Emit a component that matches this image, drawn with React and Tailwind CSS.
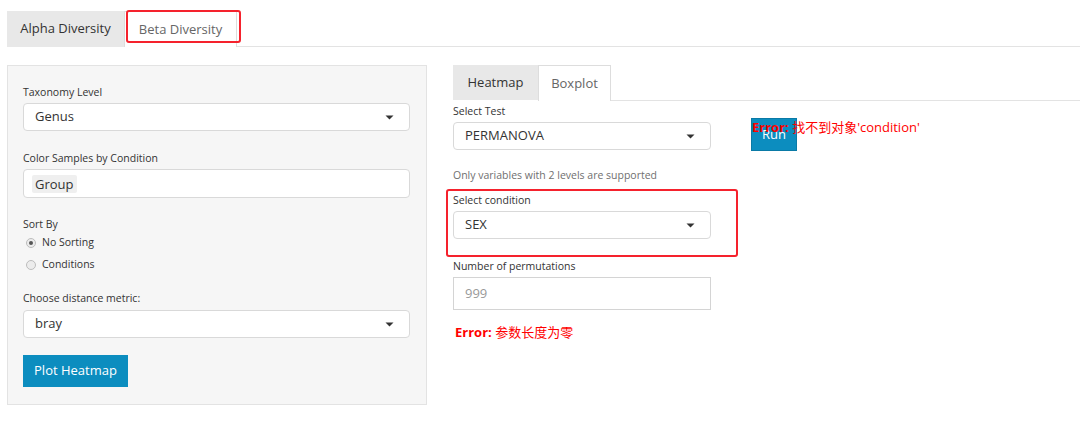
import React from "react";

const Caret = () => (
  <svg width="9" height="5" viewBox="0 0 9 5" className="shrink-0">
    <path d="M0.5 0.5 L8.5 0.5 L4.5 4.5 Z" fill="#333" />
  </svg>
);

const Select = ({ value, w }) => (
  <div className={`h-[28px] ${w} bg-white border border-[#d9d9d9] rounded-[4px] flex items-center justify-between pl-[11px] pr-[15px] text-[13px] text-[#333]`}>
    <span>{value}</span>
    <Caret />
  </div>
);

const Label = ({ children, className = "" }) => (
  <div className={`h-[14px] leading-[14px] text-[10.5px] text-[#333] ${className}`}>{children}</div>
);

const Radio = ({ checked, label }) => (
  <div className="h-[22px] flex items-center">
    <span className="ml-[3px] w-[10px] h-[10px] rounded-full border border-[#bdbdbd] bg-[#ececec] flex items-center justify-center">
      {checked && <span className="w-[4px] h-[4px] rounded-full bg-[#555]" />}
    </span>
    <span className="ml-[6px] text-[10.5px] text-[#333]">{label}</span>
  </div>
);

export default function App() {
  return (
    <div className="w-[1080px] h-[432px] bg-white overflow-hidden" style={{ fontFamily: '"Open Sans", "Noto Sans CJK SC", sans-serif' }}>
      {/* top tabs */}
      <div className="flex pt-[11px]">
        <div className="w-[7px]" />
        <div className="w-[117px] h-[36px] bg-[#e8e8e8] flex items-center justify-center text-[13px] text-[#333]">Alpha Diversity</div>
        <div className="relative w-[113px] h-[36px] bg-white border border-b-0 border-[#ddd] flex items-center justify-center text-[13px] text-[#666]">
          Beta Diversity
          <div className="absolute left-[1px] -top-[2px] w-[115px] h-[33px] border-2 border-[#f5222d] rounded-[3px]" />
        </div>
        <div className="flex-1 border-b border-[#e3e3e3]" />
      </div>

      <div className="flex mt-[18px]">
        {/* left panel */}
        <div className="ml-[7px] w-[420px] h-[340px] bg-[#f6f6f6] border border-[#e3e3e3] pt-[19px] px-[15px]">
          <Label>Taxonomy Level</Label>
          <div className="mt-[4px]"><Select value="Genus" w="w-[387px]" /></div>
          <Label className="mt-[20px]">Color Samples by Condition</Label>
          <div className="mt-[4px] w-[387px] h-[29px] bg-white border border-[#d9d9d9] rounded-[4px] flex items-center pl-[8px]">
            <span className="bg-[#efefef] rounded-[2px] px-[3px] h-[18px] leading-[18px] text-[13px] text-[#333]">Group</span>
          </div>
          <Label className="mt-[19px]">Sort By</Label>
          <div className="mt-[1px]">
            <Radio checked label="No Sorting" />
            <Radio label="Conditions" />
          </div>
          <Label className="mt-[15px]">Choose distance metric:</Label>
          <div className="mt-[5px]"><Select value="bray" w="w-[387px]" /></div>
          <div className="mt-[17px] w-[105px] h-[32px] bg-[#0c8dbf] flex items-center justify-center text-[13px] text-white">Plot Heatmap</div>
        </div>

        {/* right */}
        <div className="ml-[26px] flex-1">
          <div className="flex h-[36px]">
            <div className="w-[85px] h-[35px] bg-[#e8e8e8] flex items-center justify-center text-[13px] text-[#333]">Heatmap</div>
            <div className="w-[73px] h-[36px] bg-white border border-b-0 border-[#ddd] flex items-center justify-center text-[13px] text-[#666]">Boxplot</div>
            <div className="flex-1 border-b border-[#e3e3e3]" />
          </div>
          <div className="flex">
            <div className="w-[258px]">
              <Label className="mt-[3px]">Select Test</Label>
              <div className="mt-[4px]"><Select value="PERMANOVA" w="w-[258px]" /></div>
              <div className="mt-[18px] h-[14px] leading-[14px] text-[10.5px] text-[#6f6f6f]">Only variables with 2 levels are supported</div>
              <div className="relative mt-[11px]">
                <Label>Select condition</Label>
                <div className="mt-[4px]"><Select value="SEX" w="w-[258px]" /></div>
                <div className="absolute -left-[7px] -top-[4px] w-[292px] h-[68px] border-2 border-[#f5222d] rounded-[3px]" />
              </div>
              <Label className="mt-[20px]">Number of permutations</Label>
              <div className="mt-[4px] w-[258px] h-[33px] bg-white border border-[#d4d4d4] flex items-center pl-[11px] text-[13px] text-[#999]">999</div>
              <div className="mt-[14px] ml-[2px] h-[16px] leading-[16px] text-[13px] text-[#f00]">
                <span className="font-bold">Error:</span> 参数长度为零
              </div>
            </div>
            <div className="relative ml-[40px] mt-[17px]">
              <div className="w-[46px] h-[33px] bg-[#0c8dbf] border border-[#0a7aa6] flex items-start justify-center pt-[6px] text-[13px] text-white">Run</div>
              <div className="absolute left-[1px] top-[1px] whitespace-nowrap h-[16px] leading-[16px] text-[13px] text-[#f00]">
                <span className="font-bold">Error:</span> 找不到对象'condition'
              </div>
            </div>
          </div>
        </div>
      </div>
    </div>
  );
}
